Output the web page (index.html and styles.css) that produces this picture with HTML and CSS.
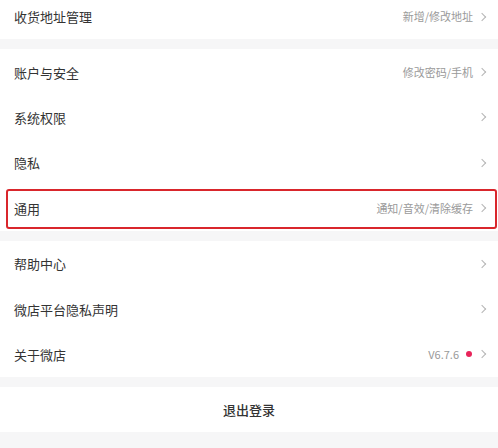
FILE: index.html
```html
<!DOCTYPE html>
<html lang="zh">
<head>
<meta charset="utf-8">
<link rel="stylesheet" href="styles.css">
</head>
<body>
<div class="page">
  <div class="group first">
    <div class="row"><span class="label">收货地址管理</span><span class="extra">新增/修改地址</span><span class="chev"></span></div>
  </div>
  <div class="group">
    <div class="row"><span class="label">账户与安全</span><span class="extra">修改密码/手机</span><span class="chev"></span></div>
    <div class="row"><span class="label">系统权限</span><span class="extra"></span><span class="chev"></span></div>
    <div class="row"><span class="label">隐私</span><span class="extra"></span><span class="chev"></span></div>
    <div class="row marked"><span class="label">通用</span><span class="extra">通知/音效/清除缓存</span><span class="chev"></span><span class="mark"></span></div>
  </div>
  <div class="group">
    <div class="row"><span class="label">帮助中心</span><span class="extra"></span><span class="chev"></span></div>
    <div class="row"><span class="label">微店平台隐私声明</span><span class="extra"></span><span class="chev"></span></div>
    <div class="row"><span class="label">关于微店</span><span class="extra">V6.7.6</span><span class="dot"></span><span class="chev"></span></div>
  </div>
  <div class="group">
    <div class="logout">退出登录</div>
  </div>
</div>
</body>
</html>
```

FILE: styles.css
```css
* { box-sizing: border-box; margin: 0; padding: 0; }
html, body { background: #f6f6f7; }
body {
  font-family: "Noto Sans CJK SC", "Noto Sans", sans-serif;
  color: #333;
}
.page {
  width: 498px;
  height: 448px;
  overflow: hidden;
  display: flex;
  flex-direction: column;
  gap: 10px;
}
.group {
  background: #fff;
  display: flex;
  flex-direction: column;
}
.group.first { margin-top: -6px; }
.row {
  position: relative;
  height: 45.4px;
  display: flex;
  align-items: center;
  padding: 0 11px 0 14px;
}
.label {
  font-size: 13px;
  color: #333;
  flex: 1;
  line-height: 1;
}
.extra {
  font-size: 11px;
  color: #9a9a9a;
  line-height: 1;
  margin-right: 6px;
}
.chev {
  width: 6px;
  height: 6px;
  border-top: 1px solid #b5b5b5;
  border-right: 1px solid #b5b5b5;
  transform: rotate(45deg);
  margin-right: 2px;
}
.dot {
  width: 6px;
  height: 6px;
  border-radius: 50%;
  background: #e8245a;
  margin-right: 7px;
  margin-left: 1px;
}
.mark {
  position: absolute;
  left: 6px;
  right: 1px;
  top: 3px;
  bottom: 2px;
  border: 2px solid #d9262c;
  border-radius: 3px;
}
.logout {
  height: 45px;
  display: flex;
  align-items: center;
  justify-content: center;
  font-size: 13px;
  font-weight: 500;
  color: #333;
}
```
